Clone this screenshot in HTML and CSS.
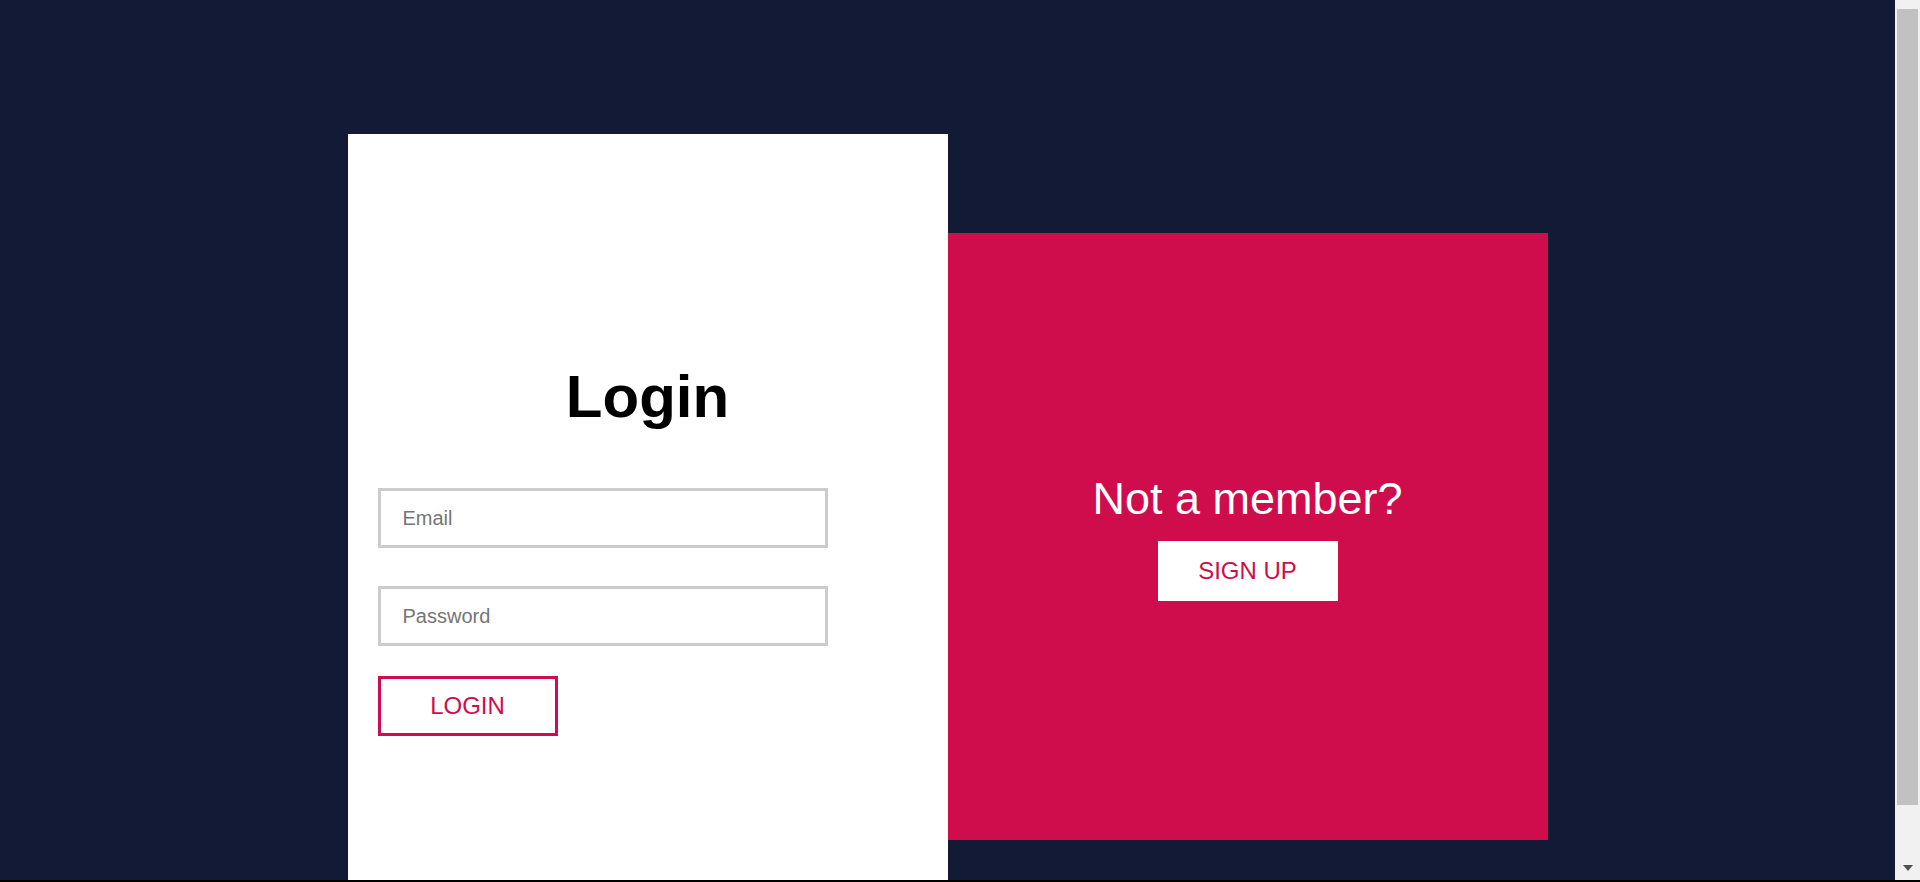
FILE: index.html
```html
<!DOCTYPE html>
<html lang="en">
<head>
<meta charset="utf-8">
<title>Login</title>
<link rel="stylesheet" href="styles.css">
</head>
<body>
<div class="screen">
  <main class="viewport">
    <div class="stage">
      <section class="card">
        <h1 class="card-title">Login</h1>
        <form class="login-form">
          <input class="field" type="email" placeholder="Email">
          <input class="field" type="password" placeholder="Password">
          <button class="btn-login" type="button">Login</button>
        </form>
      </section>
      <section class="panel">
        <h2 class="panel-title">Not a member?</h2>
        <button class="btn-signup" type="button">Sign up</button>
      </section>
    </div>
  </main>
  <aside class="scrollbar">
    <div class="sb-gap"></div>
    <div class="sb-thumb"></div>
    <div class="sb-rest"></div>
    <div class="sb-down"><span class="sb-arrow"></span></div>
  </aside>
</div>
<div class="bottom-edge"></div>
</body>
</html>
```

FILE: styles.css
```css
html, body {
  margin: 0;
  padding: 0;
}

body {
  height: 882px;
  overflow: hidden;
  display: flex;
  flex-direction: column;
  background: #121a35;
  font-family: "Liberation Sans", Arial, sans-serif;
}

.screen {
  display: flex;
  height: 880px;
}

.viewport {
  flex: 1;
  overflow: hidden;
}

.stage {
  width: 1200px;
  margin: 134px auto 0;
  display: flex;
  align-items: center;
}

.card {
  width: 600px;
  height: 805px;
  box-sizing: border-box;
  background: #fff;
  padding: 228px 30px 0;
}

.card-title {
  margin: 0 0 57px;
  font-size: 60px;
  font-weight: 700;
  line-height: normal;
  text-align: center;
  color: #000;
}

.login-form {
  display: flex;
  flex-direction: column;
  align-items: flex-start;
}

.field {
  display: block;
  width: 450px;
  height: 60px;
  box-sizing: border-box;
  border: 3px solid #cccccc;
  padding: 0 22px;
  margin: 0;
  font-family: "Liberation Sans", Arial, sans-serif;
  font-size: 20px;
  color: #333;
  background: #fff;
  outline: none;
}

.field + .field {
  margin-top: 38px;
}

.field::placeholder {
  color: #757575;
}

.btn-login {
  margin-top: 30px;
  width: 180px;
  height: 60px;
  box-sizing: border-box;
  border: 3px solid #cf0d4c;
  background: #fff;
  color: #cf0d4c;
  font-family: "Liberation Sans", Arial, sans-serif;
  font-size: 24px;
  text-transform: uppercase;
  padding: 0;
  cursor: pointer;
}

.panel {
  width: 600px;
  height: 607px;
  background: #cf0d4c;
  display: flex;
  flex-direction: column;
  align-items: center;
  justify-content: center;
  gap: 16px;
}

.panel-title {
  margin: 0;
  font-size: 45px;
  font-weight: 400;
  line-height: normal;
  color: #fff;
}

.btn-signup {
  width: 180px;
  height: 60px;
  border: none;
  background: #fff;
  color: #cf0d4c;
  font-family: "Liberation Sans", Arial, sans-serif;
  font-size: 24px;
  text-transform: uppercase;
  padding: 0;
  cursor: pointer;
}

.scrollbar {
  width: 25px;
  background: #f1f1f1;
  display: flex;
  flex-direction: column;
  align-items: center;
}

.sb-gap {
  height: 9px;
}

.sb-thumb {
  width: 21px;
  height: 796px;
  background: #c1c1c1;
}

.sb-rest {
  flex: 1;
}

.sb-down {
  height: 24px;
  width: 25px;
  display: flex;
  align-items: center;
  justify-content: center;
}

.sb-arrow {
  width: 0;
  height: 0;
  border-left: 5px solid transparent;
  border-right: 5px solid transparent;
  border-top: 6px solid #505050;
}

.bottom-edge {
  height: 2px;
  background: #000;
}
```
